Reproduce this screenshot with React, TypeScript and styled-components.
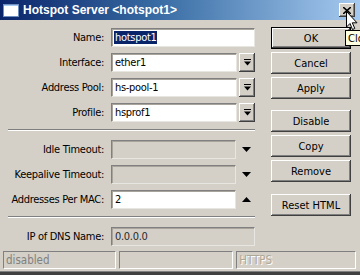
import styled, { createGlobalStyle } from "styled-components";

const UI_FONT = `"DejaVu Sans Condensed", "Liberation Sans", sans-serif`;

const GlobalStyle = createGlobalStyle`
  html, body {
    margin: 0;
    padding: 0;
    background: #d4d0c8;
  }
  body {
    font-family: ${UI_FONT};
    font-size: 11px;
    color: #000;
  }
`;

type FieldKind = "text" | "select" | "down" | "up" | "readonly";

interface FieldDef {
  label: string;
  value?: string;
  kind: FieldKind;
  disabled?: boolean;
  selected?: boolean;
}

const topFields: FieldDef[] = [
  { label: "Name:", value: "hotspot1", kind: "text", selected: true },
  { label: "Interface:", value: "ether1", kind: "select" },
  { label: "Address Pool:", value: "hs-pool-1", kind: "select" },
  { label: "Profile:", value: "hsprof1", kind: "select" },
];

const midFields: FieldDef[] = [
  { label: "Idle Timeout:", kind: "down", disabled: true },
  { label: "Keepalive Timeout:", kind: "down", disabled: true },
  { label: "Addresses Per MAC:", value: "2", kind: "up" },
];

const buttons = [
  { label: "OK", isDefault: true },
  { label: "Cancel" },
  { label: "Apply" },
  { label: "Disable", space: 8 },
  { label: "Copy" },
  { label: "Remove" },
  { label: "Reset HTML", space: 9 },
];

const Window = styled.div`
  position: relative;
  width: 360px;
  height: 275px;
  overflow: hidden;
  display: flex;
  flex-direction: column;
  background: #d4d0c8;
`;

const TitleBar = styled.div`
  height: 20px;
  flex: none;
  display: flex;
  align-items: center;
  gap: 4px;
  padding-left: 3px;
  background: linear-gradient(90deg, #0a246a 0%, #3a6ea5 45%, #a6caf0 100%);
`;

const TitleText = styled.span`
  font-family: "Liberation Sans", sans-serif;
  font-weight: bold;
  font-size: 12px;
  color: #fff;
  white-space: nowrap;
`;

const CloseButton = styled.div`
  margin-left: auto;
  margin-right: 5px;
  width: 16px;
  height: 14px;
  box-sizing: border-box;
  display: flex;
  align-items: center;
  justify-content: center;
  background: #d4d0c8;
  box-shadow: inset -1px -1px #404040, inset 1px 1px #fff,
    inset -2px -2px #808080, inset 2px 2px #d4d0c8;
`;

const Body = styled.div`
  flex: 1;
  display: flex;
  padding-top: 8px;
`;

const Form = styled.div`
  width: 247px;
  padding-left: 8px;
  display: flex;
  flex-direction: column;
  gap: 6px;
  letter-spacing: -0.3px;
`;

const Row = styled.div`
  display: grid;
  grid-template-columns: 96px 144px;
  column-gap: 7px;
  height: 19px;
  align-items: center;
`;

const Label = styled.label`
  display: flex;
  justify-content: flex-end;
  white-space: nowrap;
`;

const FieldGroup = styled.div`
  display: flex;
  align-items: center;
  gap: 2px;
  height: 19px;
`;

const TextField = styled.div<{ $width: number; $disabled?: boolean }>`
  width: ${({ $width }) => $width}px;
  height: 19px;
  box-sizing: border-box;
  display: flex;
  align-items: center;
  padding-left: 3px;
  white-space: nowrap;
  overflow: hidden;
  background: ${({ $disabled }) => ($disabled ? "#d4d0c8" : "#fff")};
  color: ${({ $disabled }) => ($disabled ? "#2a2a2a" : "#000")};
  border: 1px solid;
  border-color: #808080 #e8e6e0 #e8e6e0 #808080;
  box-shadow: inset 1px 1px #a8a49c;
`;

const Selection = styled.span`
  background: #0a246a;
  color: #fff;
  padding: 0 1px;
  margin-left: -1px;
`;

const DropButton = styled.div`
  width: 16px;
  height: 19px;
  box-sizing: border-box;
  display: flex;
  align-items: center;
  justify-content: center;
  background: #d4d0c8;
  box-shadow: inset -1px -1px #404040, inset 1px 1px #fff,
    inset -2px -2px #808080;
`;

const ArrowCell = styled.div`
  width: 17px;
  height: 19px;
  display: flex;
  align-items: center;
  justify-content: center;
`;

const Separator = styled.div`
  height: 0;
  border-top: 1px solid #808080;
  border-bottom: 1px solid #fff;
  margin: 1px 0 3px;
`;

const ButtonColumn = styled.div`
  width: 80px;
  margin-left: 16px;
  margin-top: -1px;
  display: flex;
  flex-direction: column;
  gap: 3px;
`;

const Button = styled.button<{ $default?: boolean; $space?: number }>`
  height: 22px;
  margin-top: ${({ $space }) => $space || 0}px;
  padding: 0;
  font-family: ${UI_FONT};
  font-size: 11px;
  color: #000;
  background: #d4d0c8;
  border: ${({ $default }) => ($default ? "1px solid #000" : "none")};
  box-shadow: inset -1px -1px #404040, inset 1px 1px #fff,
    inset -2px -2px #808080;
`;

const StatusBar = styled.div`
  height: 18px;
  flex: none;
  display: flex;
  gap: 3px;
  padding: 0 4px 0 3px;
  margin-bottom: 2px;
`;

const StatusCell = styled.div<{ $grow: number; $faint?: boolean }>`
  flex: ${({ $grow }) => $grow} 1 0;
  box-sizing: border-box;
  display: flex;
  align-items: center;
  padding-left: 2px;
  font-size: 11.5px;
  border: 1px solid;
  border-color: #808080 #fff #fff #808080;
  color: ${({ $faint }) => ($faint ? "#aca899" : "#808080")};
  text-shadow: ${({ $faint }) => ($faint ? "1px 1px #fff" : "none")};
`;

const Frame = styled.div`
  height: 3px;
  flex: none;
  border-top: 1px solid #808080;
  background: #404040;
`;

const Tooltip = styled.div`
  position: absolute;
  left: 345px;
  top: 30px;
  height: 16px;
  box-sizing: border-box;
  padding: 0 2px;
  display: flex;
  align-items: center;
  background: #ffffe1;
  border: 1px solid #000;
  white-space: nowrap;
`;

const Cursor = styled.svg`
  position: absolute;
  left: 346px;
  top: 11px;
`;

const DropIcon = () => (
  <svg width="7" height="7" viewBox="0 0 7 7">
    <rect x="0" y="0" width="7" height="1" fill="#000" />
    <path d="M0 2.5 H7 L3.5 6.5 Z" fill="#000" />
  </svg>
);

const Triangle = ({ up }: { up?: boolean }) => (
  <svg width="9" height="5" viewBox="0 0 9 5">
    <path d={up ? "M0 5 H9 L4.5 0 Z" : "M0 0 H9 L4.5 5 Z"} fill="#000" />
  </svg>
);

const FieldRow = ({ field }: { field: FieldDef }) => {
  const content = field.selected ? <Selection>{field.value}</Selection> : field.value;
  let widget;
  if (field.kind === "text" || field.kind === "readonly") {
    widget = (
      <TextField $width={144} $disabled={field.disabled}>
        {content}
      </TextField>
    );
  } else if (field.kind === "select") {
    widget = (
      <FieldGroup>
        <TextField $width={126}>{content}</TextField>
        <DropButton>
          <DropIcon />
        </DropButton>
      </FieldGroup>
    );
  } else {
    widget = (
      <FieldGroup>
        <TextField $width={125} $disabled={field.disabled}>
          {content}
        </TextField>
        <ArrowCell>
          <Triangle up={field.kind === "up"} />
        </ArrowCell>
      </FieldGroup>
    );
  }
  return (
    <Row>
      <Label>{field.label}</Label>
      {widget}
    </Row>
  );
};

export default function App() {
  return (
    <>
      <GlobalStyle />
      <Window>
        <TitleBar>
          <svg width="16" height="13" viewBox="0 0 16 13">
            <rect x="0" y="0" width="16" height="13" fill="#fff" />
            <rect x="0" y="0" width="16" height="2" fill="#a6caf0" />
            <rect x="0.5" y="0.5" width="15" height="12" fill="none" stroke="#6f8fc0" />
          </svg>
          <TitleText>Hotspot Server &lt;hotspot1&gt;</TitleText>
          <CloseButton>
            <svg width="8" height="7" viewBox="0 0 8 7">
              <path d="M0 0 L8 7 M8 0 L0 7" stroke="#000" strokeWidth="1.6" />
            </svg>
          </CloseButton>
        </TitleBar>
        <Body>
          <Form>
            {topFields.map((f) => (
              <FieldRow key={f.label} field={f} />
            ))}
            <Separator />
            {midFields.map((f) => (
              <FieldRow key={f.label} field={f} />
            ))}
            <Separator />
            <FieldRow field={{ label: "IP of DNS Name:", value: "0.0.0.0", kind: "readonly", disabled: true }} />
          </Form>
          <ButtonColumn>
            {buttons.map((b) => (
              <Button key={b.label} $default={b.isDefault} $space={b.space}>
                {b.label}
              </Button>
            ))}
          </ButtonColumn>
        </Body>
        <StatusBar>
          <StatusCell $grow={113}>disabled</StatusCell>
          <StatusCell $grow={114} />
          <StatusCell $grow={120} $faint>
            HTTPS
          </StatusCell>
        </StatusBar>
        <Frame />
        <Tooltip>Close</Tooltip>
        <Cursor width="12" height="20" viewBox="0 0 12 20">
          <path
            d="M0.5 0.5 V16 L4 12.5 L6.5 18.5 L8.8 17.5 L6.3 11.8 H11 Z"
            fill="#fff"
            stroke="#000"
            strokeWidth="1"
          />
        </Cursor>
      </Window>
    </>
  );
}
